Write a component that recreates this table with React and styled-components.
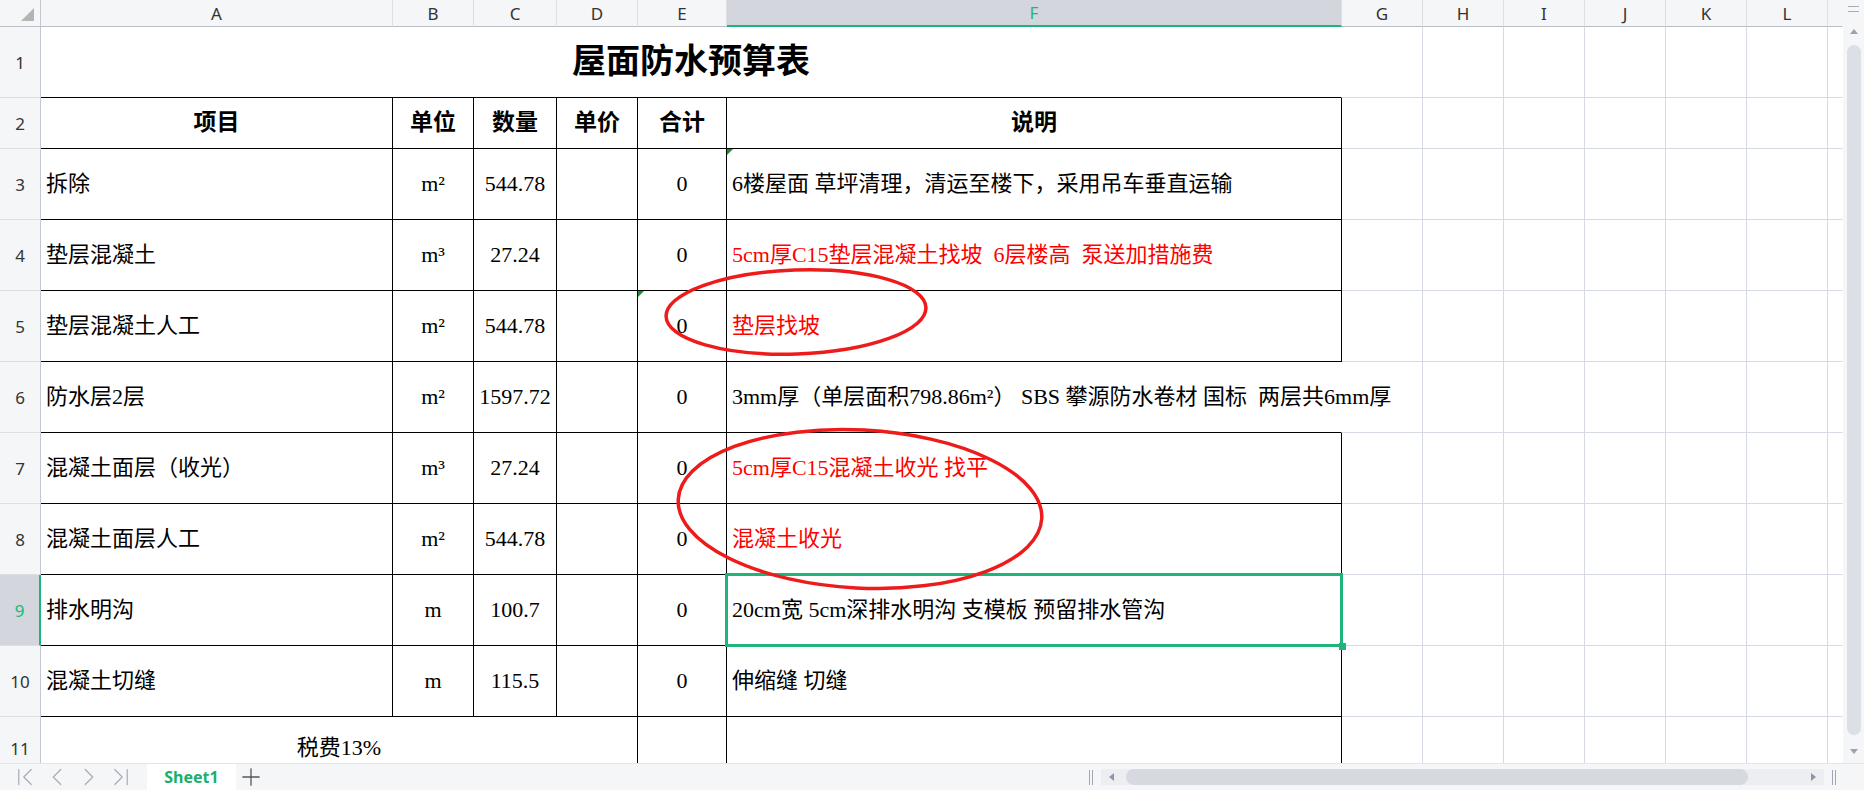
import React from 'react';
import styled, { createGlobalStyle } from 'styled-components';
import { ChevronFirst, ChevronLeft, ChevronRight, ChevronLast, Plus } from 'lucide-react';

const GRID_LINE = '#d6dae2';
const HEAD_BG = '#f5f6f8';
const SEL_BG = '#d3d6dd';
const GREEN = '#1fb57a';
const RED = '#ff0000';
const CELL_FONT = '"Liberation Serif", "Noto Sans CJK SC", serif';
const UI_FONT = '"Noto Sans", "Open Sans", "Noto Sans CJK SC", sans-serif';

const GlobalStyle = createGlobalStyle`
  html, body { margin: 0; padding: 0; background: #fff; overflow: hidden; }
  #root { width: 1864px; height: 790px; }
`;

const Page = styled.div`
  width: 1864px;
  height: 790px;
  display: flex;
  flex-direction: column;
  background: #fff;
`;

const Main = styled.div`
  display: flex;
  height: 763px;
`;

const Sheet = styled.div`
  position: relative;
  width: 1843px;
  height: 763px;
  overflow: hidden;
  display: grid;
  grid-template-columns: 41px 352px 81px 83px 81px 89px 615px repeat(6, 81px) 15px;
  grid-template-rows: 27px 71px 51px repeat(8, 71px) 64px;
  align-content: start;
`;

const Corner = styled.div`
  box-sizing: border-box;
  background: ${HEAD_BG};
  border-right: 1px solid #c3c7d0;
  border-bottom: 1px solid #b9bdc6;
  display: flex;
  justify-content: flex-end;
  align-items: flex-end;
  padding: 0 6px 5px 0;
`;

const CornerMark = styled.span`
  width: 0;
  height: 0;
  border-left: 13px solid transparent;
  border-bottom: 13px solid #b4b4b4;
`;

const ColHead = styled.div`
  box-sizing: border-box;
  display: flex;
  align-items: center;
  justify-content: center;
  background: ${p => (p.$active ? SEL_BG : HEAD_BG)};
  border-right: 1px solid ${p => (p.$last ? 'transparent' : '#dcdfe4')};
  border-bottom: ${p => (p.$active ? `2px solid ${GREEN}` : '1px solid #b9bdc6')};
  color: ${p => (p.$active ? GREEN : '#333')};
  font-family: ${UI_FONT};
  font-size: 17px;
`;

const RowHead = styled.div`
  box-sizing: border-box;
  display: flex;
  align-items: center;
  justify-content: center;
  background: ${p => (p.$active ? SEL_BG : HEAD_BG)};
  border-right: ${p => (p.$active ? `2px solid ${GREEN}` : '1px solid #c3c7d0')};
  border-bottom: 1px solid #dcdfe4;
  color: ${p => (p.$active ? GREEN : '#333')};
  font-family: ${UI_FONT};
  font-size: 17px;
`;

const lineColor = v => (v === 'black' ? '#000' : v === 'none' ? 'transparent' : GRID_LINE);

const Cell = styled.div`
  position: relative;
  box-sizing: border-box;
  grid-column: span ${p => p.$span || 1};
  border-right: 1px solid ${p => lineColor(p.$right)};
  border-bottom: 1px solid ${p => lineColor(p.$bottom)};
  display: flex;
  align-items: center;
  justify-content: ${p => (p.$align === 'center' ? 'center' : 'flex-start')};
  padding: 0 ${p => (p.$align === 'center' ? 0 : 5)}px;
  font-family: ${CELL_FONT};
  font-size: ${p => p.$size || 22}px;
  line-height: 1.2;
  font-weight: ${p => (p.$bold ? 700 : 400)};
  color: ${p => (p.$red ? RED : '#000')};
  white-space: pre;
`;

const ErrorMark = styled.span`
  position: absolute;
  top: 0;
  left: 0;
  width: 0;
  height: 0;
  border-top: 6px solid #1a8f2e;
  border-right: 6px solid transparent;
`;

const Selection = styled.div`
  position: absolute;
  top: -2px;
  left: -2px;
  right: -2px;
  bottom: -2px;
  border: 3px solid ${GREEN};
  pointer-events: none;
  z-index: 2;
`;

const Handle = styled.div`
  position: absolute;
  right: -6px;
  bottom: -6px;
  width: 7px;
  height: 7px;
  background: ${GREEN};
`;

const Annotations = styled.svg`
  position: absolute;
  left: 0;
  top: 0;
  width: 1843px;
  height: 763px;
  pointer-events: none;
  z-index: 3;
`;

/* vertical scrollbar */
const VScroll = styled.div`
  width: 21px;
  height: 763px;
  background: ${HEAD_BG};
  display: flex;
  flex-direction: column;
  align-items: center;
`;

const Grip = styled.div`
  margin-top: 6px;
  width: 11px;
  height: 4px;
  border-top: 1px solid #a7acb6;
  border-bottom: 1px solid #a7acb6;
`;

const ArrowUp = styled.span`
  margin-top: 17px;
  width: 0;
  height: 0;
  border-left: 4px solid transparent;
  border-right: 4px solid transparent;
  border-bottom: 5px solid #9aa2b3;
`;

const ArrowDown = styled.span`
  margin-top: auto;
  margin-bottom: 9px;
  width: 0;
  height: 0;
  border-left: 4px solid transparent;
  border-right: 4px solid transparent;
  border-top: 5px solid #9aa2b3;
`;

const VThumb = styled.div`
  margin-top: 11px;
  width: 14px;
  height: 690px;
  border-radius: 7px;
  background: #dcdfe5;
`;

/* bottom tab bar */
const TabBar = styled.div`
  height: 27px;
  box-sizing: border-box;
  display: flex;
  align-items: stretch;
  background: ${HEAD_BG};
  border-top: 1px solid #e3e5e9;
`;

const NavGroup = styled.div`
  display: flex;
  align-items: center;
  gap: 2px;
  padding-left: 10px;
  color: #a9aeb8;
`;

const SheetTab = styled.div`
  margin-left: 11px;
  width: 89px;
  background: #fff;
  display: flex;
  align-items: center;
  justify-content: center;
  color: #1aaf6c;
  font-family: ${UI_FONT};
  font-weight: 700;
  font-size: 16px;
`;

const AddTab = styled.div`
  display: flex;
  align-items: center;
  margin-left: 1px;
  color: #555;
`;

const HScroll = styled.div`
  margin-left: auto;
  padding-right: 28px;
  display: flex;
  align-items: center;
  gap: 8px;
`;

const Divider = styled.span`
  width: 2px;
  height: 15px;
  border-left: 1px solid #a0a6b3;
  border-right: 1px solid #a0a6b3;
`;

const Track = styled.div`
  width: 723px;
  height: 16px;
  background: #eceef2;
  display: flex;
  align-items: center;
  padding: 0 8px;
  box-sizing: border-box;
`;

const ArrowLeft = styled.span`
  width: 0;
  height: 0;
  border-top: 4px solid transparent;
  border-bottom: 4px solid transparent;
  border-right: 5px solid #8e96a9;
`;

const ArrowRight = styled.span`
  margin-left: auto;
  width: 0;
  height: 0;
  border-top: 4px solid transparent;
  border-bottom: 4px solid transparent;
  border-left: 5px solid #8e96a9;
`;

const HThumb = styled.div`
  margin-left: 12px;
  width: 622px;
  height: 16px;
  border-radius: 8px;
  background: #d6d9e0;
`;

const LETTERS = ['A', 'B', 'C', 'D', 'E', 'F', 'G', 'H', 'I', 'J', 'K', 'L', ''];

const ROWS = [
  { n: 3, a: '拆除', b: 'm²', c: '544.78', f: '6楼屋面 草坪清理，清运至楼下，采用吊车垂直运输', fMark: true },
  { n: 4, a: '垫层混凝土', b: 'm³', c: '27.24', f: '5cm厚C15垫层混凝土找坡  6层楼高  泵送加措施费', red: true },
  { n: 5, a: '垫层混凝土人工', b: 'm²', c: '544.78', f: '垫层找坡', red: true, eMark: true },
  { n: 6, a: '防水层2层', b: 'm²', c: '1597.72', f: '3mm厚（单层面积798.86m²） SBS 攀源防水卷材 国标  两层共6mm厚', open: true },
  { n: 7, a: '混凝土面层（收光）', b: 'm³', c: '27.24', f: '5cm厚C15混凝土收光 找平', red: true },
  { n: 8, a: '混凝土面层人工', b: 'm²', c: '544.78', f: '混凝土收光', red: true },
  { n: 9, a: '排水明沟', b: 'm', c: '100.7', f: '20cm宽 5cm深排水明沟 支模板 预留排水管沟', selected: true },
  { n: 10, a: '混凝土切缝', b: 'm', c: '115.5', f: '伸缩缝 切缝' },
];

const EmptyTail = ({ row }) => (
  <>
    {['G', 'H', 'I', 'J', 'K', 'L'].map(l => (
      <Cell key={`${l}${row}`} $right="grid" $bottom="grid" />
    ))}
    <Cell $right="none" $bottom="grid" />
  </>
);

export default function App() {
  return (
    <Page>
      <GlobalStyle />
      <Main>
        <Sheet>
          <Corner>
            <CornerMark />
          </Corner>
          {LETTERS.map((l, i) => (
            <ColHead key={`h${i}`} $active={l === 'F'} $last={i === LETTERS.length - 1}>
              {l}
            </ColHead>
          ))}

          {/* row 1 */}
          <RowHead>1</RowHead>
          <Cell $span={6} $align="center" $right="none" $bottom="black" $size={34} $bold>
            屋面防水预算表
          </Cell>
          <EmptyTail row={1} />

          {/* row 2 */}
          <RowHead>2</RowHead>
          {['项目', '单位', '数量', '单价', '合计', '说明'].map(t => (
            <Cell key={t} $align="center" $right="black" $bottom="black" $size={23} $bold>
              {t}
            </Cell>
          ))}
          <EmptyTail row={2} />

          {ROWS.map(r => (
            <React.Fragment key={r.n}>
              <RowHead $active={r.selected}>{r.n}</RowHead>
              <Cell $right="black" $bottom="black">{r.a}</Cell>
              <Cell $align="center" $right="black" $bottom="black">{r.b}</Cell>
              <Cell $align="center" $right="black" $bottom="black">{r.c}</Cell>
              <Cell $right="black" $bottom="black" />
              <Cell $align="center" $right="black" $bottom="black">
                {r.eMark && <ErrorMark />}0
              </Cell>
              <Cell $right={r.open ? 'none' : 'black'} $bottom="black" $red={r.red}>
                {r.fMark && <ErrorMark />}
                {r.f}
                {r.selected && (
                  <Selection>
                    <Handle />
                  </Selection>
                )}
              </Cell>
              <EmptyTail row={r.n} />
            </React.Fragment>
          ))}

          {/* row 11 */}
          <RowHead>11</RowHead>
          <Cell $span={4} $align="center" $right="black" $bottom="black">税费13%</Cell>
          <Cell $right="black" $bottom="black" />
          <Cell $right="black" $bottom="black" />
          <EmptyTail row={11} />

          <Annotations viewBox="0 0 1843 763">
            <ellipse
              cx="796"
              cy="312"
              rx="130"
              ry="42"
              transform="rotate(-2 796 312)"
              fill="none"
              stroke="#ee1b1b"
              strokeWidth="3.5"
            />
            <ellipse
              cx="860"
              cy="509"
              rx="182"
              ry="79"
              transform="rotate(3 860 509)"
              fill="none"
              stroke="#ee1b1b"
              strokeWidth="3.5"
            />
          </Annotations>
        </Sheet>
        <VScroll>
          <Grip />
          <ArrowUp />
          <VThumb />
          <ArrowDown />
        </VScroll>
      </Main>
      <TabBar>
        <NavGroup>
          <ChevronFirst size={30} strokeWidth={1} />
          <ChevronLeft size={30} strokeWidth={1} />
          <ChevronRight size={30} strokeWidth={1} />
          <ChevronLast size={30} strokeWidth={1} />
        </NavGroup>
        <SheetTab>Sheet1</SheetTab>
        <AddTab>
          <Plus size={28} strokeWidth={1.1} />
        </AddTab>
        <HScroll>
          <Divider />
          <Track>
            <ArrowLeft />
            <HThumb />
            <ArrowRight />
          </Track>
          <Divider />
        </HScroll>
      </TabBar>
    </Page>
  );
}
